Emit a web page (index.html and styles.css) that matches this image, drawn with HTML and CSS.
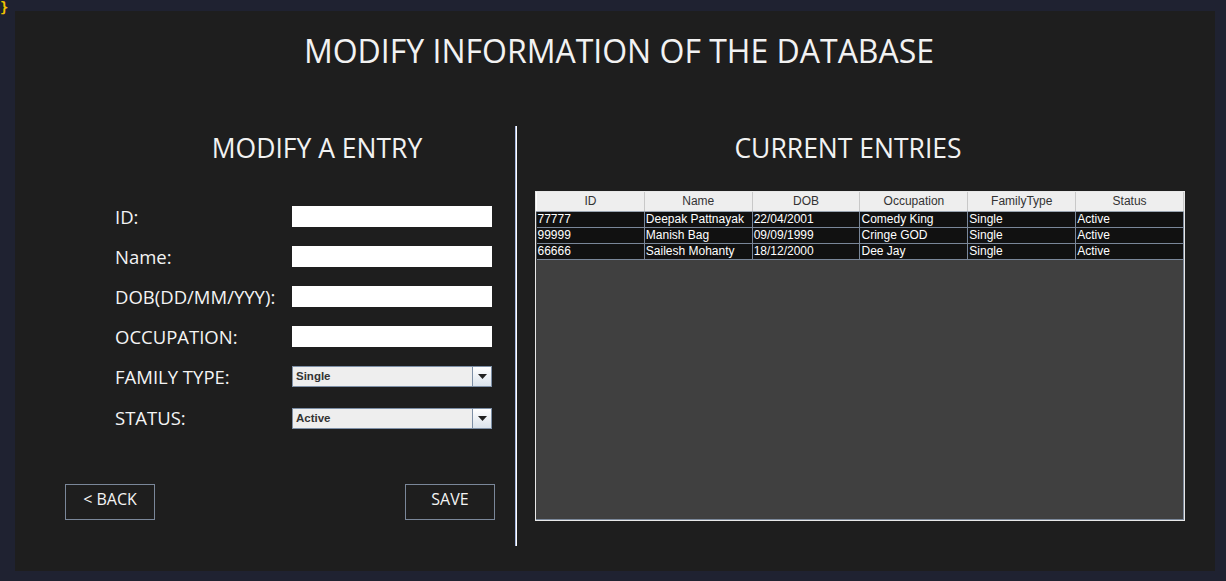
FILE: index.html
```html
<!DOCTYPE html>
<html>
<head>
<meta charset="utf-8">
<link rel="stylesheet" href="styles.css">
</head>
<body>
<span class="brace">}</span>
<div class="panel">
  <h1 class="title">MODIFY INFORMATION OF THE DATABASE</h1>
  <div class="main">
    <section class="left">
      <h2 class="heading heading-left">MODIFY A ENTRY</h2>
      <div class="form">
        <label class="label">ID:</label><div class="field"></div>
        <label class="label">Name:</label><div class="field"></div>
        <label class="label">DOB(DD/MM/YYY):</label><div class="field"></div>
        <label class="label">OCCUPATION:</label><div class="field"></div>
        <label class="label">FAMILY TYPE:</label>
        <div class="combo"><span class="combo-text">Single</span><span class="combo-btn"><svg width="9" height="5" viewBox="0 0 9 5"><path d="M0 0h9L4.5 5z" fill="#222"/></svg></span></div>
        <label class="label label-low">STATUS:</label>
        <div class="combo combo-low"><span class="combo-text">Active</span><span class="combo-btn"><svg width="9" height="5" viewBox="0 0 9 5"><path d="M0 0h9L4.5 5z" fill="#222"/></svg></span></div>
      </div>
      <div class="buttons">
        <button class="btn">&lt; BACK</button>
        <button class="btn">SAVE</button>
      </div>
    </section>
    <div class="divider"></div>
    <section class="right">
      <h2 class="heading heading-right">CURRENT ENTRIES</h2>
      <div class="table-wrap">
        <table class="grid">
          <thead>
            <tr><th>ID</th><th>Name</th><th>DOB</th><th>Occupation</th><th>FamilyType</th><th>Status</th></tr>
          </thead>
          <tbody>
            <tr><td>77777</td><td>Deepak Pattnayak</td><td>22/04/2001</td><td>Comedy King</td><td>Single</td><td>Active</td></tr>
            <tr><td>99999</td><td>Manish Bag</td><td>09/09/1999</td><td>Cringe GOD</td><td>Single</td><td>Active</td></tr>
            <tr><td>66666</td><td>Sailesh Mohanty</td><td>18/12/2000</td><td>Dee Jay</td><td>Single</td><td>Active</td></tr>
          </tbody>
        </table>
      </div>
    </section>
  </div>
</div>
</body>
</html>
```

FILE: styles.css
```css
* { box-sizing: border-box; }
html, body { margin: 0; padding: 0; }
body {
  width: 1226px;
  height: 581px;
  background: #1f2231;
  overflow: hidden;
  position: relative;
  font-family: "Open Sans", "Noto Sans", sans-serif;
  color: #f2f2f2;
}
.brace {
  position: absolute;
  left: 0;
  top: 0;
  font-family: "DejaVu Sans Mono", monospace;
  font-size: 14px;
  font-weight: 700;
  color: #f2c200;
  line-height: 15px;
}
.panel {
  margin: 11px 0 0 15px;
  width: 1200px;
  height: 560px;
  background: #1e1e1e;
  display: flex;
  flex-direction: column;
}
.title {
  margin: 0;
  padding-top: 20px;
  height: 60px;
  line-height: 40px;
  font-size: 32px;
  font-weight: 400;
  text-align: center;
  padding-left: 8px;
}
.main {
  margin-top: 55px;
  display: flex;
  height: 420px;
}
.left {
  width: 500px;
  display: flex;
  flex-direction: column;
  padding-top: 4px;
}
.heading {
  margin: 0;
  font-size: 26.5px;
  font-weight: 400;
  line-height: 36px;
  height: 36px;
  text-align: center;
}
.heading-left { margin-left: 104px; }
.form {
  margin-top: 40px;
  padding-left: 100px;
  display: grid;
  grid-template-columns: 177px 200px;
  grid-auto-rows: 40px;
  align-items: start;
}
.label {
  font-size: 18.5px;
  line-height: 22px;
  height: 21px;
  color: #f4f4f4;
  white-space: nowrap;
}
.label-low { margin-top: 1px; }
.field {
  height: 21px;
  background: #ffffff;
}
.combo {
  height: 21px;
  background: #eeeeee;
  border: 1px solid #7d8fa6;
  display: flex;
  align-items: stretch;
}
.combo-low { margin-top: 2px; }
.combo-text {
  flex: 1;
  font-family: "Liberation Sans", Arial, sans-serif;
  font-weight: 700;
  font-size: 11.5px;
  line-height: 19px;
  color: #333333;
  padding-left: 3px;
}
.combo-btn {
  width: 19px;
  border-left: 1px solid #7d8fa6;
  background: linear-gradient(#ffffff, #dbe3ec);
  display: flex;
  align-items: center;
  justify-content: center;
}
.buttons {
  margin-top: 38px;
  margin-left: 50px;
  width: 430px;
  display: flex;
  justify-content: space-between;
}
.btn {
  width: 90px;
  height: 36px;
  background: #1e1e1e;
  border: 1px solid #7a8799;
  color: #f4f4f4;
  font-family: "Open Sans", "Noto Sans", sans-serif;
  font-size: 16px;
  padding: 0 0 6px 0;
}
.divider {
  width: 2px;
  height: 420px;
  background: #ffffff;
  border-left: 1px solid #a8b8e0;
}
.right {
  flex: 1;
  padding-left: 18px;
  padding-top: 4px;
  display: flex;
  flex-direction: column;
}
.heading-right { width: 650px; padding-right: 24px; }
.table-wrap {
  margin-top: 25px;
  width: 650px;
  height: 330px;
  border: 1px solid #e8e8e8;
  background: #404040;
  box-shadow: inset -1px -1px 0 #7a8799;
}
.grid {
  border-collapse: collapse;
  table-layout: fixed;
  width: 648px;
  font-family: "Liberation Sans", Arial, sans-serif;
  font-size: 12px;
}
.grid th {
  height: 19px;
  background: #eeeeee;
  color: #333333;
  font-weight: 400;
  padding: 0;
  line-height: 19px;
  text-align: center;
  border-right: 1px solid #c8c8c8;
  border-left: 1px solid #ffffff;
  border-bottom: 1px solid #9aa4b0;
}
.grid td {
  height: 15px;
  background: #111111;
  color: #ffffff;
  padding: 0 0 0 1px;
  line-height: 15px;
  border: 1px solid #7a8799;
  border-top: none;
  white-space: nowrap;
  overflow: hidden;
}
.grid td:first-child { border-left: none; }
```
